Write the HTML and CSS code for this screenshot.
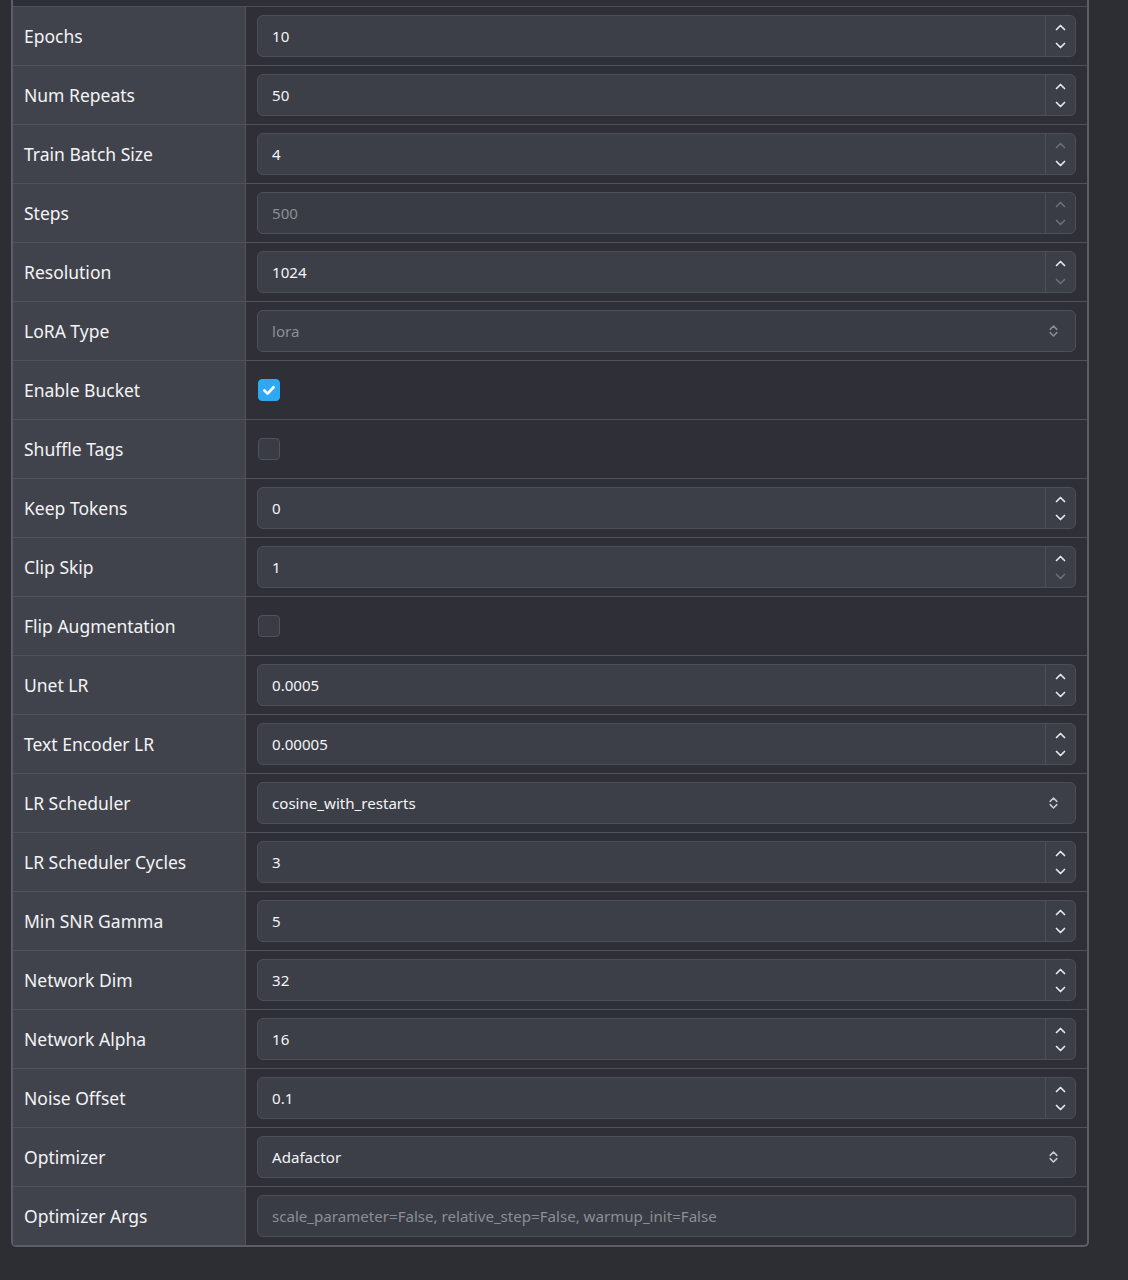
FILE: index.html
```html
<!DOCTYPE html>
<html>
<head>
<meta charset="utf-8">
<link rel="stylesheet" href="styles.css">
</head>
<body>
<div class="panel">
  <div class="stub"></div>

  <div class="row"><div class="label">Epochs</div><div class="value"><div class="field"><span class="txt">10</span><div class="spin"><svg class="up" viewBox="0 0 12 8"><path d="M2 6.5 6 2.5 10 6.5"/></svg><svg class="down" viewBox="0 0 12 8"><path d="M2 1.5 6 5.5 10 1.5"/></svg></div></div></div></div>

  <div class="row"><div class="label">Num Repeats</div><div class="value"><div class="field"><span class="txt">50</span><div class="spin"><svg class="up" viewBox="0 0 12 8"><path d="M2 6.5 6 2.5 10 6.5"/></svg><svg class="down" viewBox="0 0 12 8"><path d="M2 1.5 6 5.5 10 1.5"/></svg></div></div></div></div>

  <div class="row"><div class="label">Train Batch Size</div><div class="value"><div class="field"><span class="txt">4</span><div class="spin"><svg class="up dim" viewBox="0 0 12 8"><path d="M2 6.5 6 2.5 10 6.5"/></svg><svg class="down" viewBox="0 0 12 8"><path d="M2 1.5 6 5.5 10 1.5"/></svg></div></div></div></div>

  <div class="row"><div class="label">Steps</div><div class="value"><div class="field disabled"><span class="txt">500</span><div class="spin"><svg class="up dim" viewBox="0 0 12 8"><path d="M2 6.5 6 2.5 10 6.5"/></svg><svg class="down dim" viewBox="0 0 12 8"><path d="M2 1.5 6 5.5 10 1.5"/></svg></div></div></div></div>

  <div class="row"><div class="label">Resolution</div><div class="value"><div class="field"><span class="txt">1024</span><div class="spin"><svg class="up" viewBox="0 0 12 8"><path d="M2 6.5 6 2.5 10 6.5"/></svg><svg class="down dim" viewBox="0 0 12 8"><path d="M2 1.5 6 5.5 10 1.5"/></svg></div></div></div></div>

  <div class="row"><div class="label">LoRA Type</div><div class="value"><div class="field select disabled"><span class="txt">lora</span><svg class="sel dim" viewBox="0 0 10 14"><path d="M2 5.5 5 2.5 8 5.5M2 8.5 5 11.5 8 8.5"/></svg></div></div></div>

  <div class="row"><div class="label">Enable Bucket</div><div class="value"><span class="check on"><svg viewBox="0 0 22 22"><path d="M6 11.5 9.5 15 16 8"/></svg></span></div></div>

  <div class="row"><div class="label">Shuffle Tags</div><div class="value"><span class="check"></span></div></div>

  <div class="row"><div class="label">Keep Tokens</div><div class="value"><div class="field"><span class="txt">0</span><div class="spin"><svg class="up" viewBox="0 0 12 8"><path d="M2 6.5 6 2.5 10 6.5"/></svg><svg class="down" viewBox="0 0 12 8"><path d="M2 1.5 6 5.5 10 1.5"/></svg></div></div></div></div>

  <div class="row"><div class="label">Clip Skip</div><div class="value"><div class="field"><span class="txt">1</span><div class="spin"><svg class="up" viewBox="0 0 12 8"><path d="M2 6.5 6 2.5 10 6.5"/></svg><svg class="down dim" viewBox="0 0 12 8"><path d="M2 1.5 6 5.5 10 1.5"/></svg></div></div></div></div>

  <div class="row"><div class="label">Flip Augmentation</div><div class="value"><span class="check"></span></div></div>

  <div class="row"><div class="label">Unet LR</div><div class="value"><div class="field"><span class="txt">0.0005</span><div class="spin"><svg class="up" viewBox="0 0 12 8"><path d="M2 6.5 6 2.5 10 6.5"/></svg><svg class="down" viewBox="0 0 12 8"><path d="M2 1.5 6 5.5 10 1.5"/></svg></div></div></div></div>

  <div class="row"><div class="label">Text Encoder LR</div><div class="value"><div class="field"><span class="txt">0.00005</span><div class="spin"><svg class="up" viewBox="0 0 12 8"><path d="M2 6.5 6 2.5 10 6.5"/></svg><svg class="down" viewBox="0 0 12 8"><path d="M2 1.5 6 5.5 10 1.5"/></svg></div></div></div></div>

  <div class="row"><div class="label">LR Scheduler</div><div class="value"><div class="field select"><span class="txt">cosine_with_restarts</span><svg class="sel" viewBox="0 0 10 14"><path d="M2 5.5 5 2.5 8 5.5M2 8.5 5 11.5 8 8.5"/></svg></div></div></div>

  <div class="row"><div class="label">LR Scheduler Cycles</div><div class="value"><div class="field"><span class="txt">3</span><div class="spin"><svg class="up" viewBox="0 0 12 8"><path d="M2 6.5 6 2.5 10 6.5"/></svg><svg class="down" viewBox="0 0 12 8"><path d="M2 1.5 6 5.5 10 1.5"/></svg></div></div></div></div>

  <div class="row"><div class="label">Min SNR Gamma</div><div class="value"><div class="field"><span class="txt">5</span><div class="spin"><svg class="up" viewBox="0 0 12 8"><path d="M2 6.5 6 2.5 10 6.5"/></svg><svg class="down" viewBox="0 0 12 8"><path d="M2 1.5 6 5.5 10 1.5"/></svg></div></div></div></div>

  <div class="row"><div class="label">Network Dim</div><div class="value"><div class="field"><span class="txt">32</span><div class="spin"><svg class="up" viewBox="0 0 12 8"><path d="M2 6.5 6 2.5 10 6.5"/></svg><svg class="down" viewBox="0 0 12 8"><path d="M2 1.5 6 5.5 10 1.5"/></svg></div></div></div></div>

  <div class="row"><div class="label">Network Alpha</div><div class="value"><div class="field"><span class="txt">16</span><div class="spin"><svg class="up" viewBox="0 0 12 8"><path d="M2 6.5 6 2.5 10 6.5"/></svg><svg class="down" viewBox="0 0 12 8"><path d="M2 1.5 6 5.5 10 1.5"/></svg></div></div></div></div>

  <div class="row"><div class="label">Noise Offset</div><div class="value"><div class="field"><span class="txt">0.1</span><div class="spin"><svg class="up" viewBox="0 0 12 8"><path d="M2 6.5 6 2.5 10 6.5"/></svg><svg class="down" viewBox="0 0 12 8"><path d="M2 1.5 6 5.5 10 1.5"/></svg></div></div></div></div>

  <div class="row"><div class="label">Optimizer</div><div class="value"><div class="field select"><span class="txt">Adafactor</span><svg class="sel" viewBox="0 0 10 14"><path d="M2 5.5 5 2.5 8 5.5M2 8.5 5 11.5 8 8.5"/></svg></div></div></div>

  <div class="row last"><div class="label">Optimizer Args</div><div class="value"><div class="field disabled"><span class="txt">scale_parameter=False, relative_step=False, warmup_init=False</span></div></div></div>
</div>
</body>
</html>
```

FILE: styles.css
```css
html, body {
  margin: 0;
  padding: 0;
  background: #2d2e33;
}
body {
  font-family: "Noto Sans", "Open Sans", sans-serif;
  color: #f1f1f3;
  width: 1128px;
  height: 1280px;
  overflow: hidden;
}
.panel {
  margin-left: 11px;
  width: 1074px;
  border: 2px solid #5c5e66;
  border-top: none;
  border-radius: 0 0 5px 5px;
  background: #2f3037;
}
.stub {
  height: 7px;
  border-bottom: 1px solid #4e5058;
  box-sizing: border-box;
}
.row {
  display: flex;
  height: 58px;
  border-bottom: 1px solid #50525a;
}
.row.last {
  border-bottom: none;
}
.label {
  width: 233px;
  flex: none;
  background: #41434c;
  border-right: 1px solid #52545c;
  display: flex;
  align-items: center;
  padding-left: 11px;
  box-sizing: border-box;
  font-size: 17.5px;
  color: #f3f3f5;
}
.value {
  flex: 1;
  display: flex;
  align-items: center;
  padding: 0 11px 0 11px;
}
.field {
  flex: 1;
  height: 42px;
  box-sizing: border-box;
  border: 1px solid #4c4f58;
  border-radius: 6px;
  background: #3c3f48;
  display: flex;
  align-items: stretch;
}
.field .txt {
  flex: 1;
  display: flex;
  align-items: center;
  padding-left: 14px;
  font-size: 15.1px;
  color: #f4f4f6;
}
.field.disabled {
  background: #393c44;
}
.field.disabled .txt {
  color: #8c8e95;
}
.spin {
  width: 29px;
  border-left: 1px solid #4c4f58;
  display: flex;
  flex-direction: column;
  align-items: center;
  justify-content: center;
  gap: 11px;
}
.spin svg {
  width: 13px;
  height: 8px;
  fill: none;
  stroke: #e8e8ea;
  stroke-width: 1.7;
  stroke-linecap: round;
  stroke-linejoin: round;
}
.spin svg.dim {
  stroke: #6c6e76;
}
.select {
  align-items: center;
  padding-right: 16px;
}
.sel {
  width: 11px;
  height: 16px;
  fill: none;
  stroke: #c9cace;
  stroke-width: 1.4;
  stroke-linecap: round;
  stroke-linejoin: round;
}
.sel.dim {
  stroke: #8a8c93;
}
.check {
  width: 22px;
  height: 22px;
  box-sizing: border-box;
  margin-left: 1px;
  border-radius: 4px;
  border: 1px solid #50525b;
  background: #3a3c45;
  display: inline-block;
}
.check.on {
  background: #2ea8f2;
  border-color: #2ea8f2;
}
.check svg {
  width: 20px;
  height: 20px;
  display: block;
  fill: none;
  stroke: #ffffff;
  stroke-width: 3;
  stroke-linecap: round;
  stroke-linejoin: round;
}
```
